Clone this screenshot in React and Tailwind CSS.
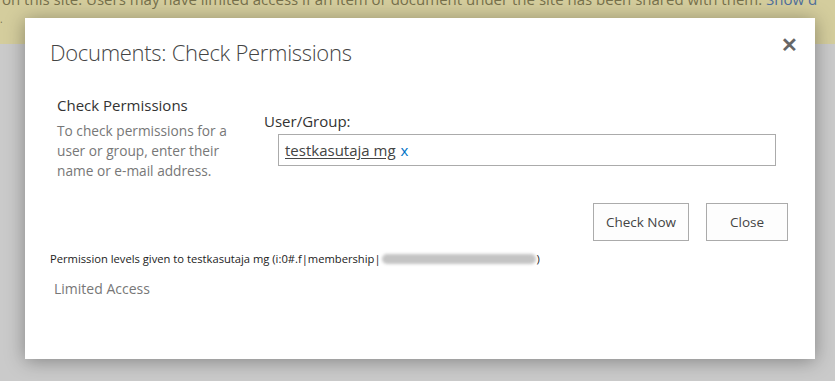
import { useState } from "react";

const font = { fontFamily: '"Open Sans", "Noto Sans", sans-serif' };

export default function App() {
  const [user, setUser] = useState("testkasutaja mg");

  return (
    <div
      className="relative h-[381px] w-[835px] overflow-hidden bg-[#cacaca]"
      style={font}
    >
      <div className="h-[44px] overflow-hidden bg-[#d4cd9d]">
        <p className="-mt-[12px] whitespace-nowrap pl-[2px] text-[15px] leading-[22px] text-[#77714c]">
          on this site. Users may have limited access if an item or document
          under the site has been shared with them.{" "}
          <span className="text-[#4f6f9c]">Show d</span>
        </p>
        <span className="mt-[4px] block text-[10px] leading-[10px] text-[#77714c]">
          .
        </span>
      </div>

      <section className="absolute left-[25px] top-[18px] flex h-[341px] w-[790px] flex-col bg-white shadow-[0_2px_18px_rgba(0,0,0,0.35)]">
        <div className="flex items-start justify-between pl-[25px] pr-[16px] pt-[18px]">
          <h1 className="text-[22px] font-light leading-[32px] tracking-[-0.3px] text-[#444]">
            Documents: Check Permissions
          </h1>
          <button
            className="-mt-[1px] mr-[1px] text-[20px] font-bold leading-[20px] text-[#666]"
            type="button"
          >
            ✕
          </button>
        </div>

        <div className="mt-[27px] flex">
          <div className="w-[206px] pl-[32px]">
            <h2 className="text-[15px] leading-[20px] text-[#333]">
              Check Permissions
            </h2>
            <p className="mt-[6px] text-[13.7px] leading-[20px] text-[#777]">
              To check permissions for a user or group, enter their name or
              e-mail address.
            </p>
          </div>

          <div className="ml-[33px] flex-1 pt-[16px]">
            <label className="block text-[15px] leading-[20px] text-[#333]">
              User/Group:
            </label>
            <div className="ml-[14px] mt-[3px] flex h-[32px] w-[498px] items-center border border-[#ababab] px-[6px] text-[15px] text-[#444]">
              <span className="underline underline-offset-2">{user}</span>
              <button
                className="ml-[5px] text-[#0072c6]"
                type="button"
                onClick={() => setUser("")}
              >
                x
              </button>
            </div>
          </div>
        </div>

        <div className="mt-[22px] flex justify-end gap-[17px] pr-[27px]">
          <button
            className="h-[38px] w-[96px] border border-[#ababab] bg-[#fdfdfd] text-[13.5px] text-[#444]"
            type="button"
          >
            Check Now
          </button>
          <button
            className="h-[38px] w-[82px] border border-[#ababab] bg-[#fdfdfd] text-[13.5px] text-[#444]"
            type="button"
          >
            Close
          </button>
        </div>

        <p className="mt-[10px] flex items-center whitespace-nowrap pl-[25px] text-[11.2px] leading-[16px] text-[#222]">
          Permission levels given to testkasutaja mg (i:0#.f|membership|
          <span className="mx-[1px] inline-block h-[10px] w-[154px] rounded-full bg-[#c4c4c4] blur-[1.5px]" />
          )
        </p>

        <p className="mt-[12px] pl-[29px] text-[14px] leading-[20px] text-[#777]">
          Limited Access
        </p>
      </section>
    </div>
  );
}
